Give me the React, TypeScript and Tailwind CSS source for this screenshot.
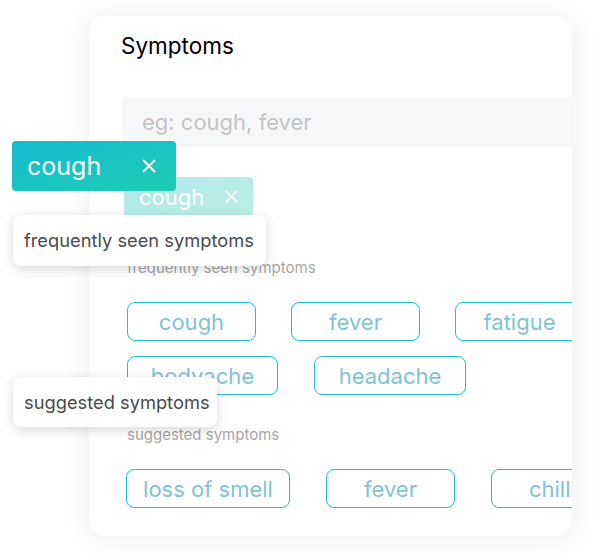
import React from "react";

function XIcon({ size, stroke }: { size: number; stroke: number }) {
  return (
    <svg width={size} height={size} viewBox="0 0 14 14" fill="none">
      <path d="M1 1L13 13M13 1L1 13" stroke="white" strokeWidth={stroke} strokeLinecap="butt" />
    </svg>
  );
}

function Chip({ label, w }: { label: string; w: string }) {
  return (
    <div
      className={`${w} h-[39px] shrink-0 rounded-[8px] border-[1.5px] border-[#22bfd0] flex items-center justify-center text-[22px] leading-none text-[#7fc4d4]`}
    >
      {label}
    </div>
  );
}

export default function App() {
  return (
    <div className="relative w-[594px] h-[560px] overflow-hidden bg-white pl-[89px] pt-[16px] font-['Inter',sans-serif]">
      <div className="w-[483px] h-[520px] rounded-[16px] overflow-hidden bg-white shadow-[0_2px_28px_rgba(0,0,0,0.08)] pl-[32px] pt-[16px]">
        <div className="text-[22.5px] leading-[28px] text-black">Symptoms</div>
        <div className="ml-[1px] mt-[37px] w-[520px] h-[50px] bg-[#f6f7f9] rounded-[6px] flex items-center pl-[20px] text-[22px] leading-none text-[#c4c4c6]">
          eg: cough, fever
        </div>
        <div className="ml-[3px] mt-[30px] w-[129px] h-[39px] rounded-[4px] bg-gradient-to-br from-[#b1e8ed] to-[#bbeee3] flex items-center pl-[15px] text-white text-[22px] leading-none">
          <span>cough</span>
          <span className="ml-[21px] flex items-center">
            <XIcon size={13} stroke={1.8} />
          </span>
        </div>
        <div className="ml-[6px] mt-[42px] text-[15px] leading-[20px] text-[#a6a6a6]">frequently seen symptoms</div>
        <div className="ml-[6px] mt-[24px] flex gap-[35px]">
          <Chip label="cough" w="w-[129px]" />
          <Chip label="fever" w="w-[129px]" />
          <Chip label="fatigue" w="w-[129px]" />
        </div>
        <div className="ml-[6px] mt-[15px] flex gap-[36px]">
          <Chip label="bodyache" w="w-[151px]" />
          <Chip label="headache" w="w-[152px]" />
        </div>
        <div className="ml-[6px] mt-[30px] text-[15px] leading-[20px] text-[#a6a6a6]">suggested symptoms</div>
        <div className="ml-[5px] mt-[24px] flex gap-[36px]">
          <Chip label="loss of smell" w="w-[164px]" />
          <Chip label="fever" w="w-[129px]" />
          <Chip label="chills" w="w-[129px]" />
        </div>
      </div>

      <div className="absolute left-[12px] top-[141px] w-[164px] h-[50px] rounded-[4px] bg-gradient-to-br from-[#15bbd0] to-[#20ccb3] flex items-center pl-[15px] text-white text-[25px] leading-none">
        <span>cough</span>
        <span className="ml-[41px] flex items-center">
          <XIcon size={14} stroke={2} />
        </span>
      </div>

      <div className="absolute left-[13px] top-[215px] w-[253px] h-[51px] rounded-[8px] bg-white shadow-[0_3px_12px_rgba(0,0,0,0.16)] flex items-center pl-[11px] text-[18.3px] leading-none text-[#4a4a4a]">
        frequently seen symptoms
      </div>

      <div className="absolute left-[13px] top-[377px] w-[204px] h-[50px] rounded-[8px] bg-white shadow-[0_3px_12px_rgba(0,0,0,0.16)] flex items-center pl-[11px] text-[18.3px] leading-none text-[#4a4a4a]">
        suggested symptoms
      </div>
    </div>
  );
}
